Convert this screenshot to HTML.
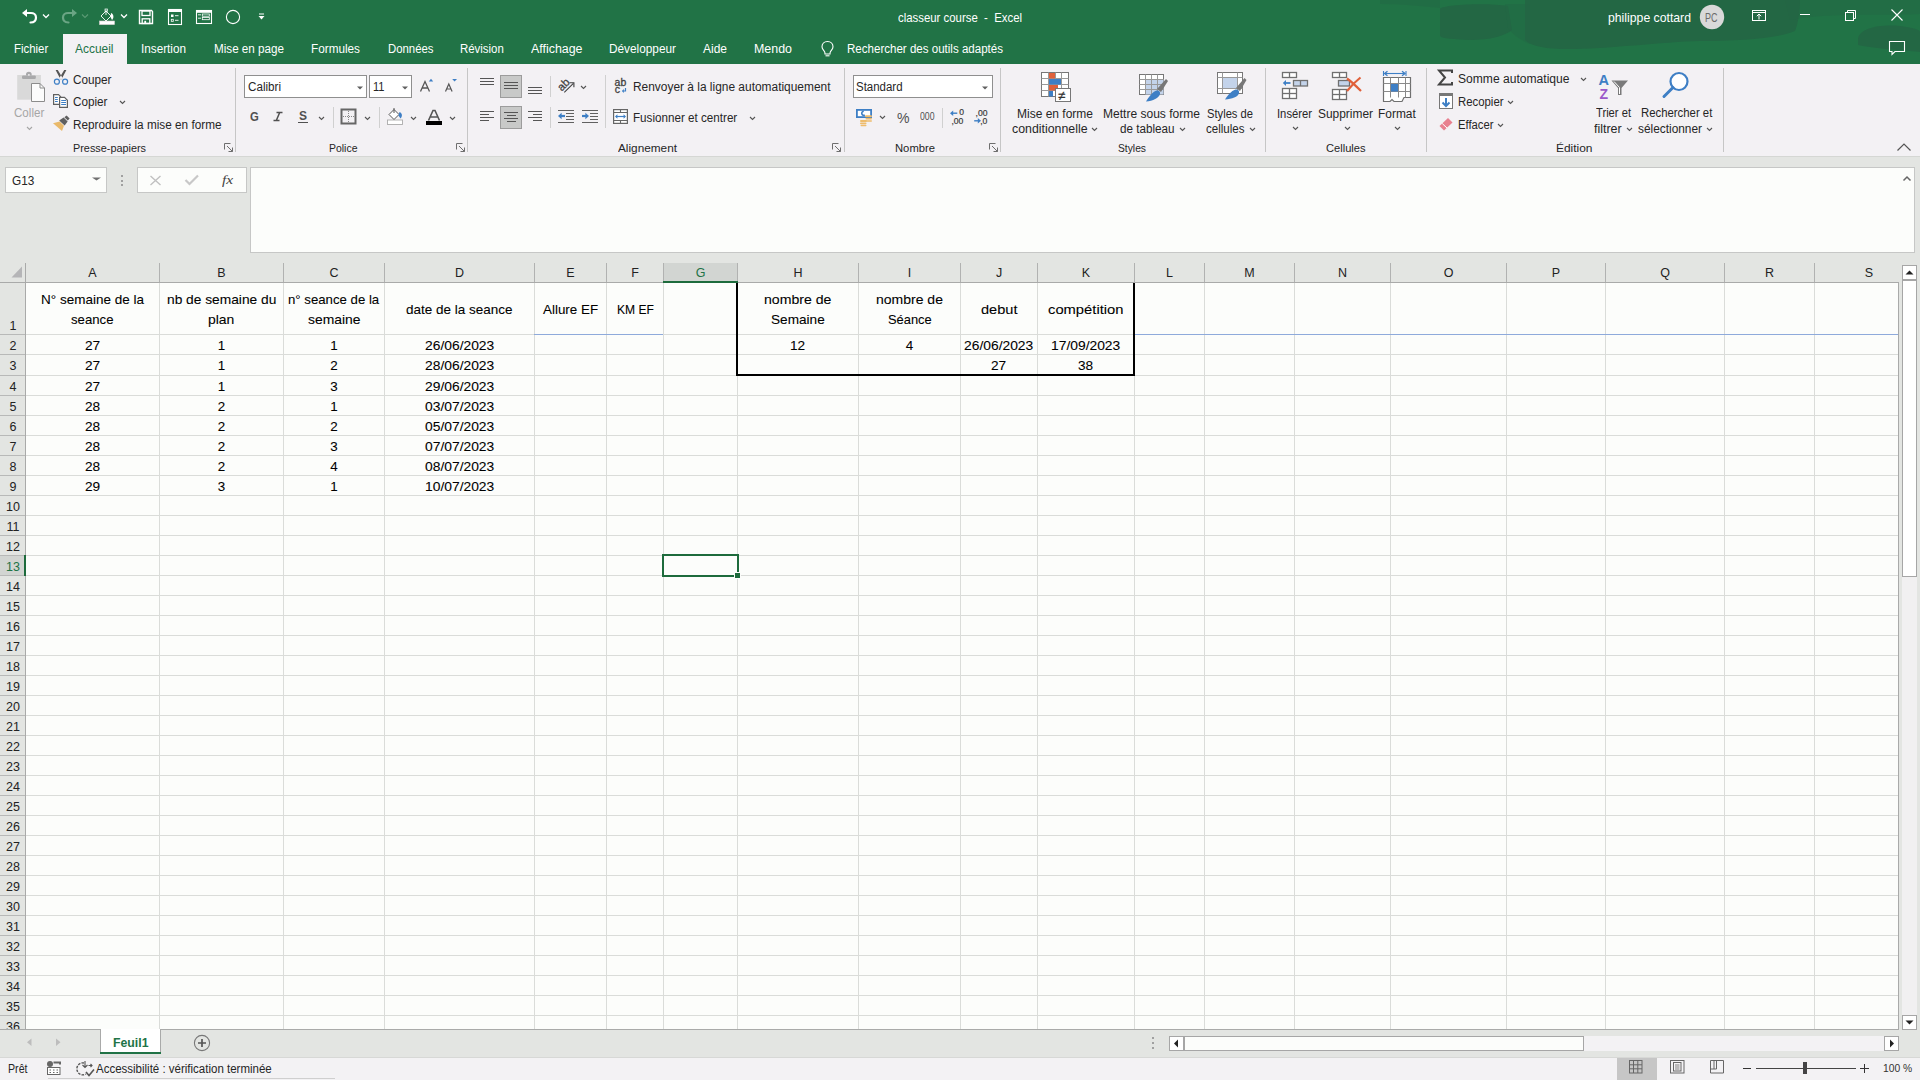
<!DOCTYPE html>
<html><head><meta charset="utf-8"><title>classeur course - Excel</title>
<style>
html,body{margin:0;padding:0;width:1920px;height:1080px;overflow:hidden;background:#f3f2f3}
body{position:relative;font-family:"Liberation Sans",sans-serif}
.t{position:absolute;white-space:pre;transform-origin:0 0}
.r{position:absolute}
.s{position:absolute;overflow:visible}
</style></head><body>
<div class="r" style="left:0px;top:0px;width:1920px;height:64px;background:#217346;"></div>
<svg class="s" style="left:1380px;top:0px;" width="540" height="64" viewBox="0 0 540 64">
<g fill="#236744">
<path d="M60 9 C64 4 110 3 128 6 L132 30 C125 36 110 40 90 40 C75 39 62 39 60 36 Z"/>
<path d="M145 0 H420 C420 10 418 25 415 31 C400 38 360 41 320 41 C280 42 220 50 180 49 C160 48 150 45 145 40 Z"/>
<path d="M478 40 C478 28 500 24 520 26 C535 28 540 30 540 32 V52 C520 50 490 48 478 45 Z"/>
</g>
<g fill="#236744" opacity="0.45">
<path d="M125 4 H150 V44 C140 40 132 34 128 28 Z"/>
<path d="M405 0 H540 V14 C500 16 450 12 410 20 Z"/>
<path d="M0 0 H60 V8 C40 6 20 4 0 4 Z"/>
</g></svg>
<svg class="s" style="left:20px;top:6px;" width="20" height="20" viewBox="0 0 20 20"><path d="M10.5 16.5 C15 16.5 16 13.5 16 11.5 C16 8.5 13.5 7 11 7 H6" fill="none" stroke="#fff" stroke-width="2.2" stroke-linecap="round"/><path d="M2 7 L7 3 V11 Z" fill="#fff"/></svg>
<svg class="s" style="left:42px;top:13px;" width="8" height="6" viewBox="0 0 8 6"><path d="M1 1.5 L4 4.5 L7 1.5" fill="none" stroke="#fff" stroke-width="1.3"/></svg>
<svg class="s" style="left:59px;top:6px;" width="20" height="20" viewBox="0 0 20 20"><path d="M9.5 16.5 C5 16.5 4 13.5 4 11.5 C4 8.5 6.5 7 9 7 H14" fill="none" stroke="#6aa584" stroke-width="2.2" stroke-linecap="round"/><path d="M18 7 L13 3 V11 Z" fill="#6aa584"/></svg>
<svg class="s" style="left:81px;top:13px;" width="8" height="6" viewBox="0 0 8 6"><path d="M1 1.5 L4 4.5 L7 1.5" fill="none" stroke="#5b9a74" stroke-width="1.1"/></svg>
<svg class="s" style="left:98px;top:8px;" width="18" height="18" viewBox="0 0 18 18"><rect x="1.5" y="13" width="15" height="3.6" fill="#fff" stroke="#d8d0d0" stroke-width="0.6"/><path d="M3 8 L8 3 L13 8 L8 13 Z" fill="none" stroke="#fff" stroke-width="0.9"/><path d="M8 1.5 V7" stroke="#fff" stroke-width="0.9"/><rect x="7" y="1" width="2.4" height="2.6" fill="none" stroke="#fff" stroke-width="0.7"/><path d="M13 5 C16 6 16 10 14 12 L12.5 9 Z" fill="#fff"/></svg>
<svg class="s" style="left:120px;top:13px;" width="8" height="6" viewBox="0 0 8 6"><path d="M1 1.5 L4 4.5 L7 1.5" fill="none" stroke="#fff" stroke-width="1.3"/></svg>
<svg class="s" style="left:138px;top:9px;" width="16" height="16" viewBox="0 0 16 16"><path d="M1.5 1.5 H13.5 L14.5 2.5 V14.5 H1.5 Z" fill="none" stroke="#fff" stroke-width="1.4"/><rect x="4" y="2" width="8" height="4.5" fill="none" stroke="#fff" stroke-width="1.3"/><rect x="4.2" y="9.8" width="7.6" height="4.7" fill="none" stroke="#fff" stroke-width="1.3"/><rect x="6.3" y="11.8" width="1.8" height="2.5" fill="#fff"/></svg>
<svg class="s" style="left:167px;top:8px;" width="16" height="18" viewBox="0 0 16 18"><rect x="1.5" y="1.5" width="13" height="15" fill="none" stroke="#fff" stroke-width="1.1"/><rect x="1.5" y="1.5" width="13" height="2.5" fill="#fff"/><rect x="4" y="6.5" width="2.5" height="2.5" fill="#fff"/><rect x="4.3" y="11.3" width="2" height="2" fill="none" stroke="#fff" stroke-width="0.8"/><path d="M8 7.7 H11.5 M8 12.3 H11.5" stroke="#fff" stroke-width="0.9"/></svg>
<svg class="s" style="left:195px;top:9px;" width="18" height="16" viewBox="0 0 18 16"><rect x="1.5" y="1.5" width="15" height="13" fill="none" stroke="#fff" stroke-width="1.1"/><rect x="1.5" y="1.5" width="15" height="2.3" fill="#fff"/><path d="M3 5.8 H6 M3 9.2 H6" stroke="#fff" stroke-width="0.9"/><rect x="7.3" y="5" width="7" height="2.2" fill="none" stroke="#fff" stroke-width="0.8"/><rect x="7.3" y="8.5" width="7" height="2.2" fill="none" stroke="#fff" stroke-width="0.8"/></svg>
<svg class="s" style="left:225px;top:9px;" width="16" height="16" viewBox="0 0 16 16"><circle cx="8" cy="8" r="6.6" fill="none" stroke="#fff" stroke-width="1.1"/></svg>
<svg class="s" style="left:257px;top:12px;" width="9" height="9" viewBox="0 0 9 9"><path d="M2 2 H7" stroke="#fff" stroke-width="1"/><path d="M1.5 4 H7.5 L4.5 7.5 Z" fill="#fff"/></svg>
<div class="t" style="left:898.00px;top:11.20px;font-size:13px;line-height:13px;color:#ffffff;font-weight:400;transform:scaleX(0.8757);">classeur course  -  Excel</div>
<div class="t" style="left:1607.50px;top:11.20px;font-size:13px;line-height:13px;color:#ffffff;font-weight:400;transform:scaleX(0.9413);">philippe cottard</div>
<svg class="s" style="left:1699px;top:4px;" width="26" height="26" viewBox="0 0 26 26"><circle cx="13" cy="13" r="12.2" fill="#d9d9d9"/></svg>
<div class="t" style="left:1705.25px;top:11.74px;font-size:12px;line-height:12px;color:#6b6b6b;font-weight:400;transform:scaleX(0.7498);">PC</div>
<svg class="s" style="left:1750px;top:8px;" width="18" height="14" viewBox="0 0 18 14"><rect x="2.5" y="2.5" width="13" height="10" fill="none" stroke="#fff" stroke-width="1"/><path d="M2.5 4.5 H15.5" stroke="#fff" stroke-width="1"/><path d="M9 11.5 V6 M6.8 8.2 L9 6 L11.2 8.2" fill="none" stroke="#fff" stroke-width="1"/></svg>
<div class="r" style="left:1800px;top:14px;width:10px;height:1px;background:#fff;"></div>
<svg class="s" style="left:1843px;top:8px;" width="16" height="14" viewBox="0 0 16 14"><rect x="2.5" y="4.5" width="8" height="8" fill="none" stroke="#fff" stroke-width="1"/><path d="M4.5 4.5 V2.5 H12.5 V10.5 H10.5" fill="none" stroke="#fff" stroke-width="1"/></svg>
<svg class="s" style="left:1889px;top:8px;" width="16" height="14" viewBox="0 0 16 14"><path d="M2.5 1.5 L13.5 12.5 M13.5 1.5 L2.5 12.5" stroke="#fff" stroke-width="1.1"/></svg>
<svg class="s" style="left:1887px;top:39px;" width="20" height="18" viewBox="0 0 20 18"><path d="M2.5 2.5 H17.5 V12.5 H8 L5 15.5 V12.5 H2.5 Z" fill="none" stroke="#fff" stroke-width="1.1"/></svg>
<div class="r" style="left:63px;top:34px;width:64px;height:30px;background:#f3f1f4;"></div>
<div class="t" style="left:13.75px;top:43.24px;font-size:12px;line-height:12px;color:#ffffff;font-weight:400;transform:scaleX(0.9512);">Fichier</div>
<div class="t" style="left:75.00px;top:43.24px;font-size:12px;line-height:12px;color:#217346;font-weight:400;transform:scaleX(0.9952);">Accueil</div>
<div class="t" style="left:141.00px;top:43.24px;font-size:12px;line-height:12px;color:#ffffff;font-weight:400;transform:scaleX(0.9777);">Insertion</div>
<div class="t" style="left:214.00px;top:43.24px;font-size:12px;line-height:12px;color:#ffffff;font-weight:400;transform:scaleX(0.9716);">Mise en page</div>
<div class="t" style="left:311.00px;top:43.24px;font-size:12px;line-height:12px;color:#ffffff;font-weight:400;transform:scaleX(0.9798);">Formules</div>
<div class="t" style="left:387.50px;top:43.24px;font-size:12px;line-height:12px;color:#ffffff;font-weight:400;transform:scaleX(0.9472);">Données</div>
<div class="t" style="left:460.00px;top:43.24px;font-size:12px;line-height:12px;color:#ffffff;font-weight:400;transform:scaleX(0.9507);">Révision</div>
<div class="t" style="left:531.00px;top:43.24px;font-size:12px;line-height:12px;color:#ffffff;font-weight:400;transform:scaleX(1.0338);">Affichage</div>
<div class="t" style="left:609.00px;top:43.24px;font-size:12px;line-height:12px;color:#ffffff;font-weight:400;transform:scaleX(0.9846);">Développeur</div>
<div class="t" style="left:703.00px;top:43.24px;font-size:12px;line-height:12px;color:#ffffff;font-weight:400;">Aide</div>
<div class="t" style="left:754.00px;top:43.24px;font-size:12px;line-height:12px;color:#ffffff;font-weight:400;transform:scaleX(1.0356);">Mendo</div>
<div class="t" style="left:847.00px;top:43.24px;font-size:12px;line-height:12px;color:#ffffff;font-weight:400;transform:scaleX(0.9624);">Rechercher des outils adaptés</div>
<svg class="s" style="left:819px;top:40px;" width="17" height="18" viewBox="0 0 17 18"><path d="M8.5 1.5 C5 1.5 3 4 3 6.8 C3 9 4.5 10 5.5 11.5 C6 12.5 6 13 6 14 H11 C11 13 11 12.5 11.5 11.5 C12.5 10 14 9 14 6.8 C14 4 12 1.5 8.5 1.5 Z" fill="none" stroke="#fff" stroke-width="1.1"/><path d="M6.5 15.8 H10.5" stroke="#fff" stroke-width="1.1"/></svg>
<div class="r" style="left:0px;top:64px;width:1920px;height:92px;background:#f3f1f4;"></div>
<div class="r" style="left:0px;top:156px;width:1920px;height:1px;background:#d5d7d4;"></div>
<div class="r" style="left:235px;top:68px;width:1px;height:84px;background:#c6c6c6;"></div>
<div class="r" style="left:467px;top:68px;width:1px;height:84px;background:#c6c6c6;"></div>
<div class="r" style="left:844px;top:68px;width:1px;height:84px;background:#c6c6c6;"></div>
<div class="r" style="left:1000px;top:68px;width:1px;height:84px;background:#c6c6c6;"></div>
<div class="r" style="left:1265px;top:68px;width:1px;height:84px;background:#c6c6c6;"></div>
<div class="r" style="left:1426px;top:68px;width:1px;height:84px;background:#c6c6c6;"></div>
<div class="r" style="left:1723px;top:68px;width:1px;height:84px;background:#c6c6c6;"></div>
<div class="r" style="left:333px;top:107px;width:1px;height:21px;background:#d0d0d0;"></div>
<div class="r" style="left:379px;top:107px;width:1px;height:21px;background:#d0d0d0;"></div>
<div class="r" style="left:550px;top:76px;width:1px;height:21px;background:#d0d0d0;"></div>
<div class="r" style="left:550px;top:107px;width:1px;height:21px;background:#d0d0d0;"></div>
<div class="r" style="left:605px;top:75px;width:1px;height:53px;background:#d0d0d0;"></div>
<div class="r" style="left:942px;top:108px;width:1px;height:20px;background:#d0d0d0;"></div>
<div class="t" style="left:72.50px;top:142.59px;font-size:11px;line-height:11px;color:#262626;font-weight:400;transform:scaleX(0.9868);">Presse-papiers</div>
<div class="t" style="left:329.00px;top:142.59px;font-size:11px;line-height:11px;color:#262626;font-weight:400;transform:scaleX(0.9512);">Police</div>
<div class="t" style="left:618.00px;top:142.59px;font-size:11px;line-height:11px;color:#262626;font-weight:400;transform:scaleX(1.0721);">Alignement</div>
<div class="t" style="left:894.50px;top:142.59px;font-size:11px;line-height:11px;color:#262626;font-weight:400;transform:scaleX(1.0224);">Nombre</div>
<div class="t" style="left:1118.00px;top:142.59px;font-size:11px;line-height:11px;color:#262626;font-weight:400;transform:scaleX(0.9347);">Styles</div>
<div class="t" style="left:1326.00px;top:142.59px;font-size:11px;line-height:11px;color:#262626;font-weight:400;transform:scaleX(1.0095);">Cellules</div>
<div class="t" style="left:1556.00px;top:142.59px;font-size:11px;line-height:11px;color:#262626;font-weight:400;transform:scaleX(1.0852);">Édition</div>
<svg class="s" style="left:224px;top:143px;" width="10" height="10" viewBox="0 0 10 10"><path d="M0.5 6.5 V0.5 H6.5" fill="none" stroke="#6e6e6e" stroke-width="1"/><path d="M3 3 L8.5 8.5 M4.5 8.5 H8.5 V4.5" fill="none" stroke="#6e6e6e" stroke-width="1"/></svg>
<svg class="s" style="left:456px;top:143px;" width="10" height="10" viewBox="0 0 10 10"><path d="M0.5 6.5 V0.5 H6.5" fill="none" stroke="#6e6e6e" stroke-width="1"/><path d="M3 3 L8.5 8.5 M4.5 8.5 H8.5 V4.5" fill="none" stroke="#6e6e6e" stroke-width="1"/></svg>
<svg class="s" style="left:832px;top:143px;" width="10" height="10" viewBox="0 0 10 10"><path d="M0.5 6.5 V0.5 H6.5" fill="none" stroke="#6e6e6e" stroke-width="1"/><path d="M3 3 L8.5 8.5 M4.5 8.5 H8.5 V4.5" fill="none" stroke="#6e6e6e" stroke-width="1"/></svg>
<svg class="s" style="left:989px;top:143px;" width="10" height="10" viewBox="0 0 10 10"><path d="M0.5 6.5 V0.5 H6.5" fill="none" stroke="#6e6e6e" stroke-width="1"/><path d="M3 3 L8.5 8.5 M4.5 8.5 H8.5 V4.5" fill="none" stroke="#6e6e6e" stroke-width="1"/></svg>
<svg class="s" style="left:15px;top:70px;" width="32" height="34" viewBox="0 0 32 34"><rect x="2.2" y="5" width="23.7" height="24.7" fill="#d9d9d9"/><rect x="7" y="5.4" width="13.8" height="3.6" rx="1.2" fill="#a9a9ab"/><path d="M11 5.5 V4.5 A2.85 2.85 0 0 1 16.7 4.5 V5.5 Z" fill="#a9a9ab"/><circle cx="13.9" cy="4.8" r="0.9" fill="#f3f1f4"/><path d="M16.5 13.5 H25 L29.5 18 V31.5 H16.5 Z" fill="#fcfcfc" stroke="#8c8c8c" stroke-width="1"/><path d="M25 13.5 V18 H29.5" fill="none" stroke="#8c8c8c" stroke-width="1"/></svg>
<div class="t" style="left:13.50px;top:106.99px;font-size:12px;line-height:12px;color:#a6a6a6;font-weight:400;transform:scaleX(0.9651);">Coller</div>
<svg class="s" style="left:26.1px;top:126.0px;" width="7" height="5" viewBox="0 0 7 5"><path d="M1 1 L3.5 3.5 L6 1" fill="none" stroke="#a6a6a6" stroke-width="1.1"/></svg>
<svg class="s" style="left:53px;top:69px;" width="16" height="17" viewBox="0 0 16 17"><path d="M2.6 1 L4.8 1 L9.6 9 L7.6 10.6 Z M13.4 1 L11.2 1 L6.4 9 L8.4 10.6 Z" fill="#555"/><circle cx="3.9" cy="12.7" r="2.5" fill="#f3f1f4" stroke="#3e7fc5" stroke-width="1.2"/><circle cx="12.1" cy="12.7" r="2.5" fill="#f3f1f4" stroke="#3e7fc5" stroke-width="1.2"/></svg>
<div class="t" style="left:72.50px;top:73.64px;font-size:12px;line-height:12px;color:#262626;font-weight:400;transform:scaleX(0.9782);">Couper</div>
<svg class="s" style="left:52px;top:93px;" width="17" height="16" viewBox="0 0 17 16"><path d="M1.6 1.6 H6.5 L8.6 3.7 V11.4 H1.6 Z" fill="#fff" stroke="#606060" stroke-width="1.2"/><path d="M7.6 4.4 H12.5 L15.4 7.3 V14.4 H7.6 Z" fill="#fff" stroke="#606060" stroke-width="1.2"/><path d="M3 4.5 H5.8 M3 6.5 H5.8 M3 8.5 H5.8 M9.2 7.5 H14 M9.2 9.5 H14 M9.2 11.5 H14" stroke="#3e7fc5" stroke-width="1"/></svg>
<div class="t" style="left:72.50px;top:96.14px;font-size:12px;line-height:12px;color:#262626;font-weight:400;transform:scaleX(0.9759);">Copier</div>
<svg class="s" style="left:118.5px;top:100.0px;" width="7" height="5" viewBox="0 0 7 5"><path d="M1 1 L3.5 3.5 L6 1" fill="none" stroke="#555" stroke-width="1.1"/></svg>
<svg class="s" style="left:52px;top:116px;" width="18" height="16" viewBox="0 0 18 16"><path d="M1 7.2 L7.6 5.4 L12 9.8 L10 15 Z" fill="#e9b96a"/><path d="M7.2 4.6 L11.6 1.6 L15.6 5.6 L12.6 9.6 Z" fill="#5f5f5f"/><path d="M12.4 1.2 L14.6 -0.6 L17.6 2.4 L15.8 4.6 Z" fill="#5f5f5f"/></svg>
<div class="t" style="left:72.50px;top:119.24px;font-size:12px;line-height:12px;color:#262626;font-weight:400;transform:scaleX(0.9808);">Reproduire la mise en forme</div>
<div class="r" style="left:244px;top:75px;width:123px;height:23px;background:#fff;box-sizing:border-box;border:1px solid #8f8f8f"></div>
<div class="t" style="left:247.50px;top:80.84px;font-size:12px;line-height:12px;color:#262626;font-weight:400;transform:scaleX(0.9703);">Calibri</div>
<svg class="s" style="left:356.5px;top:86px;" width="6" height="4" viewBox="0 0 6 4"><path d="M0 0.5 H6 L3.0 3.5 Z" fill="#606060"/></svg>
<div class="r" style="left:369px;top:75px;width:43px;height:23px;background:#fff;box-sizing:border-box;border:1px solid #8f8f8f"></div>
<div class="t" style="left:372.50px;top:80.84px;font-size:12px;line-height:12px;color:#262626;font-weight:400;transform:scaleX(0.9231);">11</div>
<svg class="s" style="left:401.5px;top:86px;" width="6" height="4" viewBox="0 0 6 4"><path d="M0 0.5 H6 L3.0 3.5 Z" fill="#606060"/></svg>
<svg class="s" style="left:418px;top:77px;" width="18" height="16" viewBox="0 0 18 16"><path d="M2.5 14.5 L7 4.5 L11.5 14.5 M4.3 11 H9.7" fill="none" stroke="#555" stroke-width="1.3"/><path d="M10.8 4.5 L13 1.8 L15.2 4.5 Z" fill="#3e7fc5"/></svg>
<svg class="s" style="left:443px;top:77px;" width="16" height="16" viewBox="0 0 16 16"><path d="M2.5 14.5 L5.8 7 L9.1 14.5 M3.8 12 H7.8" fill="none" stroke="#555" stroke-width="1.2"/><path d="M9.2 2 H14 L11.6 4.6 Z" fill="#3e7fc5"/></svg>
<div class="t" style="left:250.00px;top:110.82px;font-size:12.5px;line-height:12.5px;color:#505050;font-weight:700;transform:scaleX(0.9000);">G</div>
<svg class="s" style="left:272px;top:110px;" width="12" height="13" viewBox="0 0 12 13"><path d="M4.5 2.5 H10.5 M1.5 10.5 H7.5 M7.7 2.5 L4.3 10.5" fill="none" stroke="#505050" stroke-width="1.5"/></svg>
<div class="t" style="left:299.00px;top:110.24px;font-size:12px;line-height:12px;color:#505050;font-weight:700;">S</div>
<div class="r" style="left:298px;top:122px;width:10px;height:1px;background:#505050;"></div>
<svg class="s" style="left:317.5px;top:115.5px;" width="7" height="5" viewBox="0 0 7 5"><path d="M1 1 L3.5 3.5 L6 1" fill="none" stroke="#555" stroke-width="1.1"/></svg>
<svg class="s" style="left:340px;top:108px;" width="17" height="17" viewBox="0 0 17 17"><rect x="1.5" y="1.5" width="14" height="14" fill="none" stroke="#666" stroke-width="2"/><path d="M8.5 3 V14 M3 8.5 H14" stroke="#888" stroke-width="1" stroke-dasharray="1 1"/></svg>
<svg class="s" style="left:363.5px;top:115.5px;" width="7" height="5" viewBox="0 0 7 5"><path d="M1 1 L3.5 3.5 L6 1" fill="none" stroke="#555" stroke-width="1.1"/></svg>
<svg class="s" style="left:386px;top:107px;" width="18" height="19" viewBox="0 0 18 19"><rect x="1.5" y="13" width="15" height="4.5" fill="#fff" stroke="#aaa" stroke-width="0.9"/><path d="M3 7.5 L8 2.5 L13 7.5 L8 12.5 Z" fill="#fff" stroke="#555" stroke-width="1"/><path d="M8 1 V6" stroke="#555" stroke-width="1"/><path d="M13.5 5 C16.5 6 16.5 9.5 14.5 11.5 L12.5 8.5 Z" fill="#3e7fc5"/></svg>
<svg class="s" style="left:409.5px;top:115.5px;" width="7" height="5" viewBox="0 0 7 5"><path d="M1 1 L3.5 3.5 L6 1" fill="none" stroke="#555" stroke-width="1.1"/></svg>
<svg class="s" style="left:425px;top:109px;" width="18" height="17" viewBox="0 0 18 17"><path d="M3.5 11.5 L8 1.5 H10 L14.5 11.5 M5.5 8 H12.5" fill="none" stroke="#555" stroke-width="1.6"/><rect x="1" y="12" width="16" height="4" fill="#000"/></svg>
<svg class="s" style="left:448.5px;top:115.5px;" width="7" height="5" viewBox="0 0 7 5"><path d="M1 1 L3.5 3.5 L6 1" fill="none" stroke="#555" stroke-width="1.1"/></svg>
<div class="r" style="left:480px;top:78px;width:14px;height:1px;background:#555;"></div>
<div class="r" style="left:480px;top:81px;width:14px;height:1px;background:#555;"></div>
<div class="r" style="left:480px;top:84px;width:14px;height:1px;background:#555;"></div>
<div class="r" style="left:500px;top:75px;width:22px;height:23px;background:#c8c9c8;box-sizing:border-box;border:1px solid #9c9c9c"></div>
<div class="r" style="left:504px;top:82px;width:14px;height:1px;background:#555;"></div>
<div class="r" style="left:504px;top:85px;width:14px;height:1px;background:#555;"></div>
<div class="r" style="left:504px;top:88px;width:14px;height:1px;background:#555;"></div>
<div class="r" style="left:528px;top:87px;width:14px;height:1px;background:#555;"></div>
<div class="r" style="left:528px;top:90px;width:14px;height:1px;background:#555;"></div>
<div class="r" style="left:528px;top:93px;width:14px;height:1px;background:#555;"></div>
<svg class="s" style="left:556px;top:77px;" width="20" height="18" viewBox="0 0 20 18"><text x="0" y="0" transform="translate(7.3,7.6) rotate(-45)" text-anchor="middle" dy="3.9" font-family="Liberation Sans" font-size="11.2" fill="#404040" stroke="#404040" stroke-width="0.25">ab</text><path d="M8.3 15.4 L17.4 6.3" stroke="#404040" stroke-width="1.1"/><path d="M13.5 5.8 H17.9 V10.2" fill="none" stroke="#404040" stroke-width="1.1"/></svg>
<svg class="s" style="left:579.5px;top:84.5px;" width="7" height="5" viewBox="0 0 7 5"><path d="M1 1 L3.5 3.5 L6 1" fill="none" stroke="#555" stroke-width="1.1"/></svg>
<svg class="s" style="left:613px;top:76px;" width="16" height="18" viewBox="0 0 16 18"><text x="1.6" y="9.8" font-family="Liberation Sans" font-size="10.5" fill="#404040" stroke="#404040" stroke-width="0.3" textLength="11.6" lengthAdjust="spacingAndGlyphs">ab</text><text x="1.8" y="16.8" font-family="Liberation Sans" font-size="10.5" fill="#404040" stroke="#404040" stroke-width="0.3">c</text><path d="M12.5 12 V15 H10" fill="none" stroke="#3e7fc5" stroke-width="1.2"/><path d="M8.8 15 L10.8 13 V17 Z" fill="#3e7fc5"/></svg>
<div class="t" style="left:632.50px;top:80.84px;font-size:12px;line-height:12px;color:#262626;font-weight:400;transform:scaleX(0.9935);">Renvoyer à la ligne automatiquement</div>
<div class="r" style="left:480px;top:111px;width:14px;height:1px;background:#555;"></div>
<div class="r" style="left:480px;top:114px;width:9px;height:1px;background:#555;"></div>
<div class="r" style="left:480px;top:117px;width:14px;height:1px;background:#555;"></div>
<div class="r" style="left:480px;top:120px;width:9px;height:1px;background:#555;"></div>
<div class="r" style="left:500px;top:106px;width:22px;height:23px;background:#c8c9c8;box-sizing:border-box;border:1px solid #9c9c9c"></div>
<div class="r" style="left:504px;top:112px;width:14px;height:1px;background:#555;"></div>
<div class="r" style="left:506.5px;top:115px;width:9px;height:1px;background:#555;"></div>
<div class="r" style="left:504px;top:118px;width:14px;height:1px;background:#555;"></div>
<div class="r" style="left:506.5px;top:121px;width:9px;height:1px;background:#555;"></div>
<div class="r" style="left:528px;top:111px;width:14px;height:1px;background:#555;"></div>
<div class="r" style="left:533px;top:114px;width:9px;height:1px;background:#555;"></div>
<div class="r" style="left:528px;top:117px;width:14px;height:1px;background:#555;"></div>
<div class="r" style="left:533px;top:120px;width:9px;height:1px;background:#555;"></div>
<svg class="s" style="left:556px;top:108px;" width="20" height="17" viewBox="0 0 20 17"><path d="M2 2.5 H18 M10 5.5 H18 M10 8.5 H18 M10 11.5 H18 M2 14.5 H18" stroke="#606060" stroke-width="1.1"/><path d="M4.5 8 H9" stroke="#3e7fc5" stroke-width="2.2"/><path d="M2 8 L5.6 4.8 V11.2 Z" fill="#3e7fc5"/></svg>
<svg class="s" style="left:580px;top:108px;" width="20" height="17" viewBox="0 0 20 17"><path d="M2 2.5 H18 M10 5.5 H18 M10 8.5 H18 M10 11.5 H18 M2 14.5 H18" stroke="#606060" stroke-width="1.1"/><path d="M2 8 H6.5" stroke="#3e7fc5" stroke-width="2.2"/><path d="M9 8 L5.4 4.8 V11.2 Z" fill="#3e7fc5"/></svg>
<svg class="s" style="left:612px;top:108px;" width="17" height="17" viewBox="0 0 17 17"><rect x="1.6" y="1.6" width="13.8" height="13.8" fill="#fff" stroke="#666" stroke-width="1.2"/><path d="M1.5 4.5 H15.5 M1.5 12.5 H15.5 M8.5 1.5 V4.5 M8.5 12.5 V15.5" stroke="#666" stroke-width="1.1"/><path d="M4.5 8.5 H12.5" stroke="#3e7fc5" stroke-width="1.2"/><path d="M3 8.5 L5.4 6.3 V10.7 Z M14 8.5 L11.6 6.3 V10.7 Z" fill="#3e7fc5"/></svg>
<div class="t" style="left:632.50px;top:111.99px;font-size:12px;line-height:12px;color:#262626;font-weight:400;transform:scaleX(0.9708);">Fusionner et centrer</div>
<svg class="s" style="left:748.5px;top:115.5px;" width="7" height="5" viewBox="0 0 7 5"><path d="M1 1 L3.5 3.5 L6 1" fill="none" stroke="#555" stroke-width="1.1"/></svg>
<div class="r" style="left:853px;top:75px;width:140px;height:23px;background:#fff;box-sizing:border-box;border:1px solid #8f8f8f"></div>
<div class="t" style="left:856.00px;top:81.24px;font-size:12px;line-height:12px;color:#262626;font-weight:400;transform:scaleX(0.9547);">Standard</div>
<svg class="s" style="left:982px;top:86px;" width="6" height="4" viewBox="0 0 6 4"><path d="M0 0.5 H6 L3.0 3.5 Z" fill="#606060"/></svg>
<svg class="s" style="left:854px;top:107px;" width="20" height="20" viewBox="0 0 20 20"><rect x="2.9" y="2.9" width="14.2" height="7.2" fill="#fff" stroke="#3e7fc5" stroke-width="1.8"/><path d="M9.8 4.3 A2 2 0 1 0 10.8 8" fill="none" stroke="#3e7fc5" stroke-width="1.6"/><g fill="#eebc6c"><rect x="11" y="8.3" width="7" height="2" rx="1"/><rect x="11.5" y="11" width="6.5" height="1.6" rx="0.8"/><rect x="12" y="13.2" width="6" height="1.6" rx="0.8"/><rect x="6" y="13" width="7" height="2" rx="1"/><rect x="6" y="15.6" width="6.5" height="1.6" rx="0.8"/><rect x="6.5" y="17.8" width="6" height="1.4" rx="0.7"/></g></svg>
<svg class="s" style="left:879.0px;top:114.5px;" width="7" height="5" viewBox="0 0 7 5"><path d="M1 1 L3.5 3.5 L6 1" fill="none" stroke="#555" stroke-width="1.1"/></svg>
<div class="t" style="left:897.00px;top:111.15px;font-size:14px;line-height:14px;color:#505050;font-weight:400;transform:scaleX(1.0042);">%</div>
<div class="t" style="left:919.50px;top:112.44px;font-size:10px;line-height:10px;color:#505050;font-weight:400;transform:scaleX(0.8690);">000</div>
<svg class="s" style="left:949px;top:108px;" width="18" height="18" viewBox="0 0 18 18"><g font-family="Liberation Sans" font-size="8.6" fill="#3a3a3a" stroke="#3a3a3a" stroke-width="0.2"><text x="10.2" y="7.4">0</text><text x="2.4" y="16">,00</text></g><path d="M3 5.2 H8.3" stroke="#3e7fc5" stroke-width="1.4"/><path d="M1 5.2 L4.2 2.4 V8 Z" fill="#3e7fc5"/></svg>
<svg class="s" style="left:973px;top:108px;" width="18" height="18" viewBox="0 0 18 18"><g font-family="Liberation Sans" font-size="8.6" fill="#3a3a3a" stroke="#3a3a3a" stroke-width="0.2"><text x="2.6" y="7.6">,00</text><text x="7.2" y="16">,0</text></g><path d="M1.2 12.8 H6" stroke="#3e7fc5" stroke-width="1.4"/><path d="M8 12.8 L4.8 10 V15.6 Z" fill="#3e7fc5"/></svg>
<svg class="s" style="left:1040px;top:71px;" width="33" height="32" viewBox="0 0 33 32"><rect x="1.5" y="1.5" width="27" height="24" fill="#fff" stroke="#777" stroke-width="1"/>
<path d="M8.5 1.5 V25.5 M15.5 1.5 V25.5 M21.5 1.5 V25.5 M1.5 7.5 H28.5 M1.5 13.5 H28.5 M1.5 19.5 H28.5" stroke="#999" stroke-width="1"/>
<rect x="9" y="2" width="6" height="5.5" fill="#e0603a"/><rect x="9" y="8" width="12" height="5.5" fill="#3e7fc5"/><rect x="9" y="14" width="9" height="5.5" fill="#e0603a"/><rect x="9" y="20" width="4" height="5.5" fill="#3e7fc5"/>
<rect x="15.5" y="17.5" width="15" height="13" fill="#fff" stroke="#777" stroke-width="1"/><text x="18" y="28.5" font-family="Liberation Sans" font-size="13" fill="#333" stroke="#333" stroke-width="0.3">≠</text></svg>
<div class="t" style="left:1017.00px;top:107.74px;font-size:12px;line-height:12px;color:#262626;font-weight:400;">Mise en forme</div>
<div class="t" style="left:1012.00px;top:123.24px;font-size:12px;line-height:12px;color:#262626;font-weight:400;transform:scaleX(1.0287);">conditionnelle</div>
<svg class="s" style="left:1090.5px;top:126.5px;" width="7" height="5" viewBox="0 0 7 5"><path d="M1 1 L3.5 3.5 L6 1" fill="none" stroke="#555" stroke-width="1.1"/></svg>
<svg class="s" style="left:1138px;top:73px;" width="32" height="30" viewBox="0 0 32 30"><rect x="1.5" y="1.5" width="24" height="20" fill="#fff" stroke="#777" stroke-width="1"/>
<rect x="7.5" y="6.5" width="18" height="15" fill="#c3d3ea"/>
<path d="M7.5 1.5 V21.5 M13.5 1.5 V21.5 M19.5 1.5 V21.5 M1.5 6.5 H25.5 M1.5 11.5 H25.5 M1.5 16.5 H25.5" stroke="#999" stroke-width="1"/>
<path d="M19 16 L28 6 L30 8 L23 19 Z" fill="#777"/><path d="M8 28.5 C11 24 14 19 18.5 17.5 C21 17 22.5 19 22 21 C21 25 15 28 8 28.5 Z" fill="#3e7fc5"/></svg>
<div class="t" style="left:1103.00px;top:107.74px;font-size:12px;line-height:12px;color:#262626;font-weight:400;transform:scaleX(1.0031);">Mettre sous forme</div>
<div class="t" style="left:1119.50px;top:123.24px;font-size:12px;line-height:12px;color:#262626;font-weight:400;transform:scaleX(0.9723);">de tableau</div>
<svg class="s" style="left:1178.5px;top:126.5px;" width="7" height="5" viewBox="0 0 7 5"><path d="M1 1 L3.5 3.5 L6 1" fill="none" stroke="#555" stroke-width="1.1"/></svg>
<svg class="s" style="left:1216px;top:71px;" width="32" height="30" viewBox="0 0 32 30"><rect x="1.5" y="1.5" width="25" height="21" fill="#fff" stroke="#777" stroke-width="1"/>
<rect x="6.5" y="6.5" width="15" height="11" fill="#c3d3ea"/>
<path d="M6.5 1.5 V22.5 M21.5 1.5 V22.5 M1.5 6.5 H26.5 M1.5 17.5 H26.5" stroke="#999" stroke-width="1"/>
<path d="M20 17 L28.5 7 L30.5 9 L24 20 Z" fill="#777"/><path d="M9 28.5 C12 24 15 20 19.5 18.5 C22 18 23.5 20 23 22 C22 26 16 28 9 28.5 Z" fill="#3e7fc5"/></svg>
<div class="t" style="left:1207.00px;top:107.74px;font-size:12px;line-height:12px;color:#262626;font-weight:400;transform:scaleX(0.9319);">Styles de</div>
<div class="t" style="left:1205.50px;top:123.24px;font-size:12px;line-height:12px;color:#262626;font-weight:400;transform:scaleX(0.9620);">cellules</div>
<svg class="s" style="left:1248.5px;top:126.5px;" width="7" height="5" viewBox="0 0 7 5"><path d="M1 1 L3.5 3.5 L6 1" fill="none" stroke="#555" stroke-width="1.1"/></svg>
<svg class="s" style="left:1282px;top:72px;" width="16" height="7" viewBox="0 0 16 7"><rect x="0.5" y="0.5" width="14" height="5" fill="#fff" stroke="#707070" stroke-width="1.3"/><path d="M7.5 0.5 V5.5" stroke="#707070" stroke-width="1.3"/></svg>
<svg class="s" style="left:1282px;top:79px;" width="10" height="8" viewBox="0 0 10 8"><path d="M2 4 H8.5" stroke="#3e7fc5" stroke-width="1.8"/><path d="M0.8 4 L4 1 V7 Z" fill="#3e7fc5"/></svg>
<svg class="s" style="left:1293px;top:80px;" width="17" height="8" viewBox="0 0 17 8"><rect x="0.5" y="0.5" width="14" height="5.5" fill="#c3d3ea" stroke="#707070" stroke-width="1.3"/><path d="M7.5 0.5 V6" stroke="#707070" stroke-width="1.3"/></svg>
<svg class="s" style="left:1282px;top:88px;" width="16" height="12" viewBox="0 0 16 12"><rect x="0.5" y="0.5" width="14" height="10" fill="#fff" stroke="#707070" stroke-width="1.3"/><path d="M7.5 0.5 V10.5" stroke="#707070" stroke-width="1.3"/><path d="M0.5 5.5 H14.5" stroke="#707070" stroke-width="1.3"/></svg>
<svg class="s" style="left:1332px;top:72px;" width="16" height="7" viewBox="0 0 16 7"><rect x="0.5" y="0.5" width="14" height="5" fill="#fff" stroke="#707070" stroke-width="1.3"/><path d="M7.5 0.5 V5.5" stroke="#707070" stroke-width="1.3"/></svg>
<svg class="s" style="left:1338px;top:80px;" width="14" height="8" viewBox="0 0 14 8"><rect x="0.5" y="0.5" width="11" height="5.5" fill="#c3d3ea" stroke="#707070" stroke-width="1.3"/></svg>
<svg class="s" style="left:1332px;top:89px;" width="16" height="12" viewBox="0 0 16 12"><rect x="0.5" y="0.5" width="14" height="10" fill="#fff" stroke="#707070" stroke-width="1.3"/><path d="M7.5 0.5 V10.5" stroke="#707070" stroke-width="1.3"/><path d="M0.5 5.5 H14.5" stroke="#707070" stroke-width="1.3"/></svg>
<svg class="s" style="left:1345px;top:76px;" width="18" height="17" viewBox="0 0 18 17"><path d="M2 2.5 C7 6 11 10 16 15 M15.5 1.5 C11 5 6 10 2 15" fill="none" stroke="#e0603a" stroke-width="2.2"/></svg>
<svg class="s" style="left:1382px;top:70px;" width="31" height="33" viewBox="0 0 31 33"><path d="M1.5 1 V6 M24 1 V6" fill="none" stroke="#3e7fc5" stroke-width="1.1"/><path d="M2.5 3.5 H23" stroke="#3e7fc5" stroke-width="1.1"/>
<path d="M5.5 1.2 L2.5 3.5 L5.5 5.8 M20 1.2 L23 3.5 L20 5.8" fill="none" stroke="#3e7fc5" stroke-width="1.3"/>
<path d="M1.5 7.5 H28.5 V27.5 H22 L20 31.5 H12 L10 29.5 L8 31.5 H1.5 Z" fill="#fff" stroke="#707070" stroke-width="1.2"/>
<path d="M1.5 13.5 H28.5 M1.5 21.5 H28.5 M8.5 7.5 V27.5 M16.5 7.5 V27.5 M23.5 7.5 V27.5" stroke="#8a8a8a" stroke-width="1"/>
<rect x="9" y="14" width="7" height="7.5" fill="#3e7fc5"/></svg>
<div class="t" style="left:1277.00px;top:107.74px;font-size:12px;line-height:12px;color:#262626;font-weight:400;transform:scaleX(0.9371);">Insérer</div>
<svg class="s" style="left:1292.0px;top:125.5px;" width="7" height="5" viewBox="0 0 7 5"><path d="M1 1 L3.5 3.5 L6 1" fill="none" stroke="#555" stroke-width="1.1"/></svg>
<div class="t" style="left:1318.00px;top:107.74px;font-size:12px;line-height:12px;color:#262626;font-weight:400;transform:scaleX(0.9936);">Supprimer</div>
<svg class="s" style="left:1343.5px;top:125.5px;" width="7" height="5" viewBox="0 0 7 5"><path d="M1 1 L3.5 3.5 L6 1" fill="none" stroke="#555" stroke-width="1.1"/></svg>
<div class="t" style="left:1378.00px;top:107.74px;font-size:12px;line-height:12px;color:#262626;font-weight:400;transform:scaleX(0.9933);">Format</div>
<svg class="s" style="left:1394.0px;top:125.5px;" width="7" height="5" viewBox="0 0 7 5"><path d="M1 1 L3.5 3.5 L6 1" fill="none" stroke="#555" stroke-width="1.1"/></svg>
<svg class="s" style="left:1437px;top:69px;" width="17" height="17" viewBox="0 0 17 17"><path d="M15 4 V1.5 H2 L8 8.5 L2 15.5 H15 V13" fill="none" stroke="#444" stroke-width="2"/></svg>
<div class="t" style="left:1457.50px;top:73.24px;font-size:12px;line-height:12px;color:#262626;font-weight:400;transform:scaleX(1.0070);">Somme automatique</div>
<svg class="s" style="left:1579.5px;top:76.5px;" width="7" height="5" viewBox="0 0 7 5"><path d="M1 1 L3.5 3.5 L6 1" fill="none" stroke="#555" stroke-width="1.1"/></svg>
<svg class="s" style="left:1438px;top:92px;" width="16" height="18" viewBox="0 0 16 18"><rect x="1.5" y="1.5" width="13" height="15" fill="#fff" stroke="#777" stroke-width="1"/><rect x="1" y="1" width="14" height="3" fill="#777"/><path d="M8 6 V14 M4.5 10.5 L8 14 L11.5 10.5" fill="none" stroke="#3e7fc5" stroke-width="2"/></svg>
<div class="t" style="left:1457.50px;top:96.24px;font-size:12px;line-height:12px;color:#262626;font-weight:400;transform:scaleX(0.9474);">Recopier</div>
<svg class="s" style="left:1507.0px;top:99.5px;" width="7" height="5" viewBox="0 0 7 5"><path d="M1 1 L3.5 3.5 L6 1" fill="none" stroke="#555" stroke-width="1.1"/></svg>
<svg class="s" style="left:1438px;top:116px;" width="16" height="15" viewBox="0 0 16 15"><path d="M1.5 10 L10 2 L14.5 6.5 L6 14.5 Z" fill="#e8808f"/><path d="M4.2 7.5 L9 12" stroke="#fff" stroke-width="1"/></svg>
<div class="t" style="left:1457.50px;top:118.74px;font-size:12px;line-height:12px;color:#262626;font-weight:400;transform:scaleX(0.9392);">Effacer</div>
<svg class="s" style="left:1497.0px;top:122.5px;" width="7" height="5" viewBox="0 0 7 5"><path d="M1 1 L3.5 3.5 L6 1" fill="none" stroke="#555" stroke-width="1.1"/></svg>
<svg class="s" style="left:1597px;top:71px;" width="34" height="30" viewBox="0 0 34 30"><text x="1.5" y="13.5" font-family="Liberation Sans" font-size="14.5" font-weight="700" fill="#3e7fc5">A</text><text x="2.5" y="28" font-family="Liberation Sans" font-size="14" font-weight="700" fill="#9b59c9">Z</text><path d="M14.5 9.5 H31 L24.5 17 V24 H21 V17 Z" fill="#7a7a7a"/><path d="M17 10.5 L22.5 16.5 V23" fill="none" stroke="#fff" stroke-width="1"/></svg>
<div class="t" style="left:1596.00px;top:106.94px;font-size:12px;line-height:12px;color:#262626;font-weight:400;transform:scaleX(0.9318);">Trier et</div>
<div class="t" style="left:1594.00px;top:122.94px;font-size:12px;line-height:12px;color:#262626;font-weight:400;transform:scaleX(1.0387);">filtrer</div>
<svg class="s" style="left:1626.3px;top:126.5px;" width="7" height="5" viewBox="0 0 7 5"><path d="M1 1 L3.5 3.5 L6 1" fill="none" stroke="#555" stroke-width="1.1"/></svg>
<svg class="s" style="left:1660px;top:70px;" width="32" height="31" viewBox="0 0 32 31"><circle cx="19" cy="11.5" r="8.5" fill="#fff" stroke="#3e7fc5" stroke-width="2.2"/><path d="M13 17.5 L4 26.5" stroke="#3e7fc5" stroke-width="3" stroke-linecap="round"/></svg>
<div class="t" style="left:1640.70px;top:106.94px;font-size:12px;line-height:12px;color:#262626;font-weight:400;transform:scaleX(0.9460);">Rechercher et</div>
<div class="t" style="left:1638.00px;top:122.94px;font-size:12px;line-height:12px;color:#262626;font-weight:400;transform:scaleX(0.9891);">sélectionner</div>
<svg class="s" style="left:1706.2px;top:126.5px;" width="7" height="5" viewBox="0 0 7 5"><path d="M1 1 L3.5 3.5 L6 1" fill="none" stroke="#555" stroke-width="1.1"/></svg>
<svg class="s" style="left:1896px;top:142px;" width="16" height="10" viewBox="0 0 16 10"><path d="M1.5 8.5 L8 2 L14.5 8.5" fill="none" stroke="#555" stroke-width="1.2"/></svg>
<div class="r" style="left:0px;top:157px;width:1920px;height:106px;background:#e3e5e2;"></div>
<div class="r" style="left:5px;top:167px;width:102px;height:26px;background:#fcfdfb;box-sizing:border-box;border:1px solid #c6c7c6"></div>
<div class="t" style="left:12.20px;top:174.62px;font-size:12.5px;line-height:12.5px;color:#262626;font-weight:400;transform:scaleX(0.9438);">G13</div>
<svg class="s" style="left:92px;top:177px;" width="9" height="4" viewBox="0 0 9 4"><path d="M0 0.5 H9 L4.5 3.5 Z" fill="#707070"/></svg>
<div class="r" style="left:121px;top:175px;width:2px;height:2px;background:#a0a0a0;"></div>
<div class="r" style="left:121px;top:179.5px;width:2px;height:2px;background:#a0a0a0;"></div>
<div class="r" style="left:121px;top:184px;width:2px;height:2px;background:#a0a0a0;"></div>
<div class="r" style="left:137px;top:167px;width:110px;height:26px;background:#fcfdfb;box-sizing:border-box;border:1px solid #c6c7c6"></div>
<svg class="s" style="left:149px;top:175px;" width="14" height="11" viewBox="0 0 14 11"><path d="M1.5 1 L11.5 10 M11.5 1 L1.5 10" stroke="#c0c0c0" stroke-width="1.4"/></svg>
<svg class="s" style="left:184px;top:174px;" width="16" height="12" viewBox="0 0 16 12"><path d="M1.5 6 L5.5 10 L14 1.5" fill="none" stroke="#c8c8c8" stroke-width="2.2"/></svg>
<div class="t" style="left:222.00px;top:173.20px;font-size:13px;line-height:13px;color:#444;font-weight:400;transform:scaleX(1.1868);font-family:'Liberation Serif',serif;font-style:italic;">fx</div>
<div class="r" style="left:250px;top:167px;width:1665px;height:86px;background:#fcfdfb;box-sizing:border-box;border:1px solid #c6c7c6"></div>
<svg class="s" style="left:1902px;top:174px;" width="10" height="9" viewBox="0 0 10 9"><path d="M1.5 6.5 L5 3 L8.5 6.5" fill="none" stroke="#666" stroke-width="1.5"/></svg>
<div class="r" style="left:0px;top:263px;width:1899px;height:19px;background:#e3e5e2;"></div>
<div class="r" style="left:0px;top:283px;width:25px;height:746px;background:#e3e5e2;"></div>
<div class="r" style="left:26px;top:283px;width:1872px;height:746px;background:#fcfdfb;"></div>
<div class="r" style="left:664px;top:263px;width:73px;height:19px;background:#d2d5d2;"></div>
<div class="r" style="left:0px;top:556px;width:25px;height:19px;background:#d2d5d2;"></div>
<div class="r" style="left:159px;top:283px;width:1px;height:746px;background:#dadcd9;"></div>
<div class="r" style="left:283px;top:283px;width:1px;height:746px;background:#dadcd9;"></div>
<div class="r" style="left:384px;top:283px;width:1px;height:746px;background:#dadcd9;"></div>
<div class="r" style="left:534px;top:283px;width:1px;height:746px;background:#dadcd9;"></div>
<div class="r" style="left:606px;top:283px;width:1px;height:746px;background:#dadcd9;"></div>
<div class="r" style="left:663px;top:283px;width:1px;height:746px;background:#dadcd9;"></div>
<div class="r" style="left:737px;top:283px;width:1px;height:746px;background:#dadcd9;"></div>
<div class="r" style="left:858px;top:283px;width:1px;height:746px;background:#dadcd9;"></div>
<div class="r" style="left:960px;top:283px;width:1px;height:746px;background:#dadcd9;"></div>
<div class="r" style="left:1037px;top:283px;width:1px;height:746px;background:#dadcd9;"></div>
<div class="r" style="left:1134px;top:283px;width:1px;height:746px;background:#dadcd9;"></div>
<div class="r" style="left:1204px;top:283px;width:1px;height:746px;background:#dadcd9;"></div>
<div class="r" style="left:1294px;top:283px;width:1px;height:746px;background:#dadcd9;"></div>
<div class="r" style="left:1390px;top:283px;width:1px;height:746px;background:#dadcd9;"></div>
<div class="r" style="left:1506px;top:283px;width:1px;height:746px;background:#dadcd9;"></div>
<div class="r" style="left:1605px;top:283px;width:1px;height:746px;background:#dadcd9;"></div>
<div class="r" style="left:1724px;top:283px;width:1px;height:746px;background:#dadcd9;"></div>
<div class="r" style="left:1814px;top:283px;width:1px;height:746px;background:#dadcd9;"></div>
<div class="r" style="left:26px;top:334px;width:1872px;height:1px;background:#dadcd9;"></div>
<div class="r" style="left:26px;top:354px;width:1872px;height:1px;background:#dadcd9;"></div>
<div class="r" style="left:26px;top:375px;width:1872px;height:1px;background:#dadcd9;"></div>
<div class="r" style="left:26px;top:395px;width:1872px;height:1px;background:#dadcd9;"></div>
<div class="r" style="left:26px;top:415px;width:1872px;height:1px;background:#dadcd9;"></div>
<div class="r" style="left:26px;top:435px;width:1872px;height:1px;background:#dadcd9;"></div>
<div class="r" style="left:26px;top:455px;width:1872px;height:1px;background:#dadcd9;"></div>
<div class="r" style="left:26px;top:475px;width:1872px;height:1px;background:#dadcd9;"></div>
<div class="r" style="left:26px;top:495px;width:1872px;height:1px;background:#dadcd9;"></div>
<div class="r" style="left:26px;top:515px;width:1872px;height:1px;background:#dadcd9;"></div>
<div class="r" style="left:26px;top:535px;width:1872px;height:1px;background:#dadcd9;"></div>
<div class="r" style="left:26px;top:555px;width:1872px;height:1px;background:#dadcd9;"></div>
<div class="r" style="left:26px;top:575px;width:1872px;height:1px;background:#dadcd9;"></div>
<div class="r" style="left:26px;top:595px;width:1872px;height:1px;background:#dadcd9;"></div>
<div class="r" style="left:26px;top:615px;width:1872px;height:1px;background:#dadcd9;"></div>
<div class="r" style="left:26px;top:635px;width:1872px;height:1px;background:#dadcd9;"></div>
<div class="r" style="left:26px;top:655px;width:1872px;height:1px;background:#dadcd9;"></div>
<div class="r" style="left:26px;top:675px;width:1872px;height:1px;background:#dadcd9;"></div>
<div class="r" style="left:26px;top:695px;width:1872px;height:1px;background:#dadcd9;"></div>
<div class="r" style="left:26px;top:715px;width:1872px;height:1px;background:#dadcd9;"></div>
<div class="r" style="left:26px;top:735px;width:1872px;height:1px;background:#dadcd9;"></div>
<div class="r" style="left:26px;top:755px;width:1872px;height:1px;background:#dadcd9;"></div>
<div class="r" style="left:26px;top:775px;width:1872px;height:1px;background:#dadcd9;"></div>
<div class="r" style="left:26px;top:795px;width:1872px;height:1px;background:#dadcd9;"></div>
<div class="r" style="left:26px;top:815px;width:1872px;height:1px;background:#dadcd9;"></div>
<div class="r" style="left:26px;top:835px;width:1872px;height:1px;background:#dadcd9;"></div>
<div class="r" style="left:26px;top:855px;width:1872px;height:1px;background:#dadcd9;"></div>
<div class="r" style="left:26px;top:875px;width:1872px;height:1px;background:#dadcd9;"></div>
<div class="r" style="left:26px;top:895px;width:1872px;height:1px;background:#dadcd9;"></div>
<div class="r" style="left:26px;top:915px;width:1872px;height:1px;background:#dadcd9;"></div>
<div class="r" style="left:26px;top:935px;width:1872px;height:1px;background:#dadcd9;"></div>
<div class="r" style="left:26px;top:955px;width:1872px;height:1px;background:#dadcd9;"></div>
<div class="r" style="left:26px;top:975px;width:1872px;height:1px;background:#dadcd9;"></div>
<div class="r" style="left:26px;top:995px;width:1872px;height:1px;background:#dadcd9;"></div>
<div class="r" style="left:26px;top:1015px;width:1872px;height:1px;background:#dadcd9;"></div>
<div class="r" style="left:159px;top:263px;width:1px;height:19px;background:#b1b2b1;"></div>
<div class="r" style="left:283px;top:263px;width:1px;height:19px;background:#b1b2b1;"></div>
<div class="r" style="left:384px;top:263px;width:1px;height:19px;background:#b1b2b1;"></div>
<div class="r" style="left:534px;top:263px;width:1px;height:19px;background:#b1b2b1;"></div>
<div class="r" style="left:606px;top:263px;width:1px;height:19px;background:#b1b2b1;"></div>
<div class="r" style="left:663px;top:263px;width:1px;height:19px;background:#b1b2b1;"></div>
<div class="r" style="left:737px;top:263px;width:1px;height:19px;background:#b1b2b1;"></div>
<div class="r" style="left:858px;top:263px;width:1px;height:19px;background:#b1b2b1;"></div>
<div class="r" style="left:960px;top:263px;width:1px;height:19px;background:#b1b2b1;"></div>
<div class="r" style="left:1037px;top:263px;width:1px;height:19px;background:#b1b2b1;"></div>
<div class="r" style="left:1134px;top:263px;width:1px;height:19px;background:#b1b2b1;"></div>
<div class="r" style="left:1204px;top:263px;width:1px;height:19px;background:#b1b2b1;"></div>
<div class="r" style="left:1294px;top:263px;width:1px;height:19px;background:#b1b2b1;"></div>
<div class="r" style="left:1390px;top:263px;width:1px;height:19px;background:#b1b2b1;"></div>
<div class="r" style="left:1506px;top:263px;width:1px;height:19px;background:#b1b2b1;"></div>
<div class="r" style="left:1605px;top:263px;width:1px;height:19px;background:#b1b2b1;"></div>
<div class="r" style="left:1724px;top:263px;width:1px;height:19px;background:#b1b2b1;"></div>
<div class="r" style="left:1814px;top:263px;width:1px;height:19px;background:#b1b2b1;"></div>
<div class="r" style="left:25px;top:263px;width:1px;height:766px;background:#a9aaa9;"></div>
<div class="r" style="left:0px;top:282px;width:1898px;height:1px;background:#a9aaa9;"></div>
<div class="r" style="left:0px;top:334px;width:25px;height:1px;background:#b8b9b8;"></div>
<div class="r" style="left:0px;top:354px;width:25px;height:1px;background:#b8b9b8;"></div>
<div class="r" style="left:0px;top:375px;width:25px;height:1px;background:#b8b9b8;"></div>
<div class="r" style="left:0px;top:395px;width:25px;height:1px;background:#b8b9b8;"></div>
<div class="r" style="left:0px;top:415px;width:25px;height:1px;background:#b8b9b8;"></div>
<div class="r" style="left:0px;top:435px;width:25px;height:1px;background:#b8b9b8;"></div>
<div class="r" style="left:0px;top:455px;width:25px;height:1px;background:#b8b9b8;"></div>
<div class="r" style="left:0px;top:475px;width:25px;height:1px;background:#b8b9b8;"></div>
<div class="r" style="left:0px;top:495px;width:25px;height:1px;background:#b8b9b8;"></div>
<div class="r" style="left:0px;top:515px;width:25px;height:1px;background:#b8b9b8;"></div>
<div class="r" style="left:0px;top:535px;width:25px;height:1px;background:#b8b9b8;"></div>
<div class="r" style="left:0px;top:555px;width:25px;height:1px;background:#b8b9b8;"></div>
<div class="r" style="left:0px;top:575px;width:25px;height:1px;background:#b8b9b8;"></div>
<div class="r" style="left:0px;top:595px;width:25px;height:1px;background:#b8b9b8;"></div>
<div class="r" style="left:0px;top:615px;width:25px;height:1px;background:#b8b9b8;"></div>
<div class="r" style="left:0px;top:635px;width:25px;height:1px;background:#b8b9b8;"></div>
<div class="r" style="left:0px;top:655px;width:25px;height:1px;background:#b8b9b8;"></div>
<div class="r" style="left:0px;top:675px;width:25px;height:1px;background:#b8b9b8;"></div>
<div class="r" style="left:0px;top:695px;width:25px;height:1px;background:#b8b9b8;"></div>
<div class="r" style="left:0px;top:715px;width:25px;height:1px;background:#b8b9b8;"></div>
<div class="r" style="left:0px;top:735px;width:25px;height:1px;background:#b8b9b8;"></div>
<div class="r" style="left:0px;top:755px;width:25px;height:1px;background:#b8b9b8;"></div>
<div class="r" style="left:0px;top:775px;width:25px;height:1px;background:#b8b9b8;"></div>
<div class="r" style="left:0px;top:795px;width:25px;height:1px;background:#b8b9b8;"></div>
<div class="r" style="left:0px;top:815px;width:25px;height:1px;background:#b8b9b8;"></div>
<div class="r" style="left:0px;top:835px;width:25px;height:1px;background:#b8b9b8;"></div>
<div class="r" style="left:0px;top:855px;width:25px;height:1px;background:#b8b9b8;"></div>
<div class="r" style="left:0px;top:875px;width:25px;height:1px;background:#b8b9b8;"></div>
<div class="r" style="left:0px;top:895px;width:25px;height:1px;background:#b8b9b8;"></div>
<div class="r" style="left:0px;top:915px;width:25px;height:1px;background:#b8b9b8;"></div>
<div class="r" style="left:0px;top:935px;width:25px;height:1px;background:#b8b9b8;"></div>
<div class="r" style="left:0px;top:955px;width:25px;height:1px;background:#b8b9b8;"></div>
<div class="r" style="left:0px;top:975px;width:25px;height:1px;background:#b8b9b8;"></div>
<div class="r" style="left:0px;top:995px;width:25px;height:1px;background:#b8b9b8;"></div>
<div class="r" style="left:0px;top:1015px;width:25px;height:1px;background:#b8b9b8;"></div>
<svg class="s" style="left:10px;top:265px;" width="14" height="14" viewBox="0 0 14 14"><path d="M12 1.5 V12.5 H1.5 Z" fill="#b5b5b7"/></svg>
<div class="t" style="left:88.33px;top:266.82px;font-size:12.5px;line-height:12.5px;color:#222;font-weight:400;">A</div>
<div class="t" style="left:217.33px;top:266.82px;font-size:12.5px;line-height:12.5px;color:#222;font-weight:400;">B</div>
<div class="t" style="left:329.49px;top:266.82px;font-size:12.5px;line-height:12.5px;color:#222;font-weight:400;">C</div>
<div class="t" style="left:454.99px;top:266.82px;font-size:12.5px;line-height:12.5px;color:#222;font-weight:400;">D</div>
<div class="t" style="left:566.33px;top:266.82px;font-size:12.5px;line-height:12.5px;color:#222;font-weight:400;">E</div>
<div class="t" style="left:631.18px;top:266.82px;font-size:12.5px;line-height:12.5px;color:#222;font-weight:400;">F</div>
<div class="t" style="left:695.64px;top:266.82px;font-size:12.5px;line-height:12.5px;color:#217346;font-weight:400;">G</div>
<div class="t" style="left:793.49px;top:266.82px;font-size:12.5px;line-height:12.5px;color:#222;font-weight:400;">H</div>
<div class="t" style="left:907.76px;top:266.82px;font-size:12.5px;line-height:12.5px;color:#222;font-weight:400;">I</div>
<div class="t" style="left:995.88px;top:266.82px;font-size:12.5px;line-height:12.5px;color:#222;font-weight:400;">J</div>
<div class="t" style="left:1081.83px;top:266.82px;font-size:12.5px;line-height:12.5px;color:#222;font-weight:400;">K</div>
<div class="t" style="left:1166.02px;top:266.82px;font-size:12.5px;line-height:12.5px;color:#222;font-weight:400;">L</div>
<div class="t" style="left:1244.29px;top:266.82px;font-size:12.5px;line-height:12.5px;color:#222;font-weight:400;">M</div>
<div class="t" style="left:1337.99px;top:266.82px;font-size:12.5px;line-height:12.5px;color:#222;font-weight:400;">N</div>
<div class="t" style="left:1443.64px;top:266.82px;font-size:12.5px;line-height:12.5px;color:#222;font-weight:400;">O</div>
<div class="t" style="left:1551.83px;top:266.82px;font-size:12.5px;line-height:12.5px;color:#222;font-weight:400;">P</div>
<div class="t" style="left:1660.14px;top:266.82px;font-size:12.5px;line-height:12.5px;color:#222;font-weight:400;">Q</div>
<div class="t" style="left:1764.99px;top:266.82px;font-size:12.5px;line-height:12.5px;color:#222;font-weight:400;">R</div>
<div class="t" style="left:1864.83px;top:266.82px;font-size:12.5px;line-height:12.5px;color:#222;font-weight:400;">S</div>
<div class="r" style="left:663px;top:281px;width:75px;height:2px;background:#1d6b3c;"></div>
<div class="t" style="left:9.52px;top:320.12px;font-size:12.5px;line-height:12.5px;color:#222;font-weight:400;">1</div>
<div class="t" style="left:9.52px;top:340.12px;font-size:12.5px;line-height:12.5px;color:#222;font-weight:400;">2</div>
<div class="t" style="left:9.52px;top:360.12px;font-size:12.5px;line-height:12.5px;color:#222;font-weight:400;">3</div>
<div class="t" style="left:9.52px;top:381.12px;font-size:12.5px;line-height:12.5px;color:#222;font-weight:400;">4</div>
<div class="t" style="left:9.52px;top:401.12px;font-size:12.5px;line-height:12.5px;color:#222;font-weight:400;">5</div>
<div class="t" style="left:9.52px;top:421.12px;font-size:12.5px;line-height:12.5px;color:#222;font-weight:400;">6</div>
<div class="t" style="left:9.52px;top:441.12px;font-size:12.5px;line-height:12.5px;color:#222;font-weight:400;">7</div>
<div class="t" style="left:9.52px;top:461.12px;font-size:12.5px;line-height:12.5px;color:#222;font-weight:400;">8</div>
<div class="t" style="left:9.52px;top:481.12px;font-size:12.5px;line-height:12.5px;color:#222;font-weight:400;">9</div>
<div class="t" style="left:6.05px;top:501.12px;font-size:12.5px;line-height:12.5px;color:#222;font-weight:400;">10</div>
<div class="t" style="left:6.51px;top:521.12px;font-size:12.5px;line-height:12.5px;color:#222;font-weight:400;">11</div>
<div class="t" style="left:6.05px;top:541.12px;font-size:12.5px;line-height:12.5px;color:#222;font-weight:400;">12</div>
<div class="t" style="left:6.05px;top:561.12px;font-size:12.5px;line-height:12.5px;color:#217346;font-weight:400;">13</div>
<div class="t" style="left:6.05px;top:581.12px;font-size:12.5px;line-height:12.5px;color:#222;font-weight:400;">14</div>
<div class="t" style="left:6.05px;top:601.12px;font-size:12.5px;line-height:12.5px;color:#222;font-weight:400;">15</div>
<div class="t" style="left:6.05px;top:621.12px;font-size:12.5px;line-height:12.5px;color:#222;font-weight:400;">16</div>
<div class="t" style="left:6.05px;top:641.12px;font-size:12.5px;line-height:12.5px;color:#222;font-weight:400;">17</div>
<div class="t" style="left:6.05px;top:661.12px;font-size:12.5px;line-height:12.5px;color:#222;font-weight:400;">18</div>
<div class="t" style="left:6.05px;top:681.12px;font-size:12.5px;line-height:12.5px;color:#222;font-weight:400;">19</div>
<div class="t" style="left:6.05px;top:701.12px;font-size:12.5px;line-height:12.5px;color:#222;font-weight:400;">20</div>
<div class="t" style="left:6.05px;top:721.12px;font-size:12.5px;line-height:12.5px;color:#222;font-weight:400;">21</div>
<div class="t" style="left:6.05px;top:741.12px;font-size:12.5px;line-height:12.5px;color:#222;font-weight:400;">22</div>
<div class="t" style="left:6.05px;top:761.12px;font-size:12.5px;line-height:12.5px;color:#222;font-weight:400;">23</div>
<div class="t" style="left:6.05px;top:781.12px;font-size:12.5px;line-height:12.5px;color:#222;font-weight:400;">24</div>
<div class="t" style="left:6.05px;top:801.12px;font-size:12.5px;line-height:12.5px;color:#222;font-weight:400;">25</div>
<div class="t" style="left:6.05px;top:821.12px;font-size:12.5px;line-height:12.5px;color:#222;font-weight:400;">26</div>
<div class="t" style="left:6.05px;top:841.12px;font-size:12.5px;line-height:12.5px;color:#222;font-weight:400;">27</div>
<div class="t" style="left:6.05px;top:861.12px;font-size:12.5px;line-height:12.5px;color:#222;font-weight:400;">28</div>
<div class="t" style="left:6.05px;top:881.12px;font-size:12.5px;line-height:12.5px;color:#222;font-weight:400;">29</div>
<div class="t" style="left:6.05px;top:901.12px;font-size:12.5px;line-height:12.5px;color:#222;font-weight:400;">30</div>
<div class="t" style="left:6.05px;top:921.12px;font-size:12.5px;line-height:12.5px;color:#222;font-weight:400;">31</div>
<div class="t" style="left:6.05px;top:941.12px;font-size:12.5px;line-height:12.5px;color:#222;font-weight:400;">32</div>
<div class="t" style="left:6.05px;top:961.12px;font-size:12.5px;line-height:12.5px;color:#222;font-weight:400;">33</div>
<div class="t" style="left:6.05px;top:981.12px;font-size:12.5px;line-height:12.5px;color:#222;font-weight:400;">34</div>
<div class="t" style="left:6.05px;top:1001.12px;font-size:12.5px;line-height:12.5px;color:#222;font-weight:400;">35</div>
<div class="t" style="left:6.05px;top:1021.12px;font-size:12.5px;line-height:12.5px;color:#222;font-weight:400;">36</div>
<div class="r" style="left:24px;top:555px;width:2px;height:21px;background:#1d6b3c;"></div>
<div class="r" style="left:534px;top:334px;width:129px;height:1px;background:#8eaadb;"></div>
<div class="r" style="left:1134px;top:334px;width:764px;height:1px;background:#8eaadb;"></div>
<div class="t" style="left:41.00px;top:292.91px;font-size:13.4px;line-height:13.4px;color:#000;font-weight:400;transform:scaleX(1.0079);-webkit-text-stroke:0.08px #000;">N° semaine de la</div>
<div class="t" style="left:71.25px;top:312.66px;font-size:13.4px;line-height:13.4px;color:#000;font-weight:400;transform:scaleX(0.9836);-webkit-text-stroke:0.08px #000;">seance</div>
<div class="t" style="left:166.80px;top:292.91px;font-size:13.4px;line-height:13.4px;color:#000;font-weight:400;transform:scaleX(1.0269);-webkit-text-stroke:0.08px #000;">nb de semaine du</div>
<div class="t" style="left:208.30px;top:312.66px;font-size:13.4px;line-height:13.4px;color:#000;font-weight:400;transform:scaleX(1.0420);-webkit-text-stroke:0.08px #000;">plan</div>
<div class="t" style="left:288.38px;top:292.91px;font-size:13.4px;line-height:13.4px;color:#000;font-weight:400;transform:scaleX(0.9862);-webkit-text-stroke:0.08px #000;">n° seance de la</div>
<div class="t" style="left:307.70px;top:312.66px;font-size:13.4px;line-height:13.4px;color:#000;font-weight:400;transform:scaleX(1.0385);-webkit-text-stroke:0.08px #000;">semaine</div>
<div class="t" style="left:406.25px;top:302.66px;font-size:13.4px;line-height:13.4px;color:#000;font-weight:400;transform:scaleX(1.0067);-webkit-text-stroke:0.08px #000;">date de la seance</div>
<div class="t" style="left:543.00px;top:302.66px;font-size:13.4px;line-height:13.4px;color:#000;font-weight:400;-webkit-text-stroke:0.08px #000;">Allure EF</div>
<div class="t" style="left:616.50px;top:302.66px;font-size:13.4px;line-height:13.4px;color:#000;font-weight:400;transform:scaleX(0.9036);-webkit-text-stroke:0.08px #000;">KM EF</div>
<div class="t" style="left:764.25px;top:292.91px;font-size:13.4px;line-height:13.4px;color:#000;font-weight:400;transform:scaleX(1.0536);-webkit-text-stroke:0.08px #000;">nombre de</div>
<div class="t" style="left:771.12px;top:312.66px;font-size:13.4px;line-height:13.4px;color:#000;font-weight:400;transform:scaleX(1.0163);-webkit-text-stroke:0.08px #000;">Semaine</div>
<div class="t" style="left:876.00px;top:292.91px;font-size:13.4px;line-height:13.4px;color:#000;font-weight:400;transform:scaleX(1.0458);-webkit-text-stroke:0.08px #000;">nombre de</div>
<div class="t" style="left:887.62px;top:312.66px;font-size:13.4px;line-height:13.4px;color:#000;font-weight:400;transform:scaleX(0.9626);-webkit-text-stroke:0.08px #000;">Séance</div>
<div class="t" style="left:980.75px;top:302.66px;font-size:13.4px;line-height:13.4px;color:#000;font-weight:400;transform:scaleX(1.0885);-webkit-text-stroke:0.08px #000;">debut</div>
<div class="t" style="left:1048.25px;top:302.66px;font-size:13.4px;line-height:13.4px;color:#000;font-weight:400;transform:scaleX(1.1018);-webkit-text-stroke:0.08px #000;">compétition</div>
<div class="t" style="left:84.90px;top:339.26px;font-size:13.4px;line-height:13.4px;color:#000;font-weight:400;transform:scaleX(1.0198);-webkit-text-stroke:0.08px #000;">27</div>
<div class="t" style="left:217.77px;top:339.26px;font-size:13.4px;line-height:13.4px;color:#000;font-weight:400;-webkit-text-stroke:0.08px #000;">1</div>
<div class="t" style="left:330.27px;top:339.26px;font-size:13.4px;line-height:13.4px;color:#000;font-weight:400;-webkit-text-stroke:0.08px #000;">1</div>
<div class="t" style="left:424.85px;top:339.26px;font-size:13.4px;line-height:13.4px;color:#000;font-weight:400;transform:scaleX(1.0333);-webkit-text-stroke:0.08px #000;">26/06/2023</div>
<div class="t" style="left:84.90px;top:359.26px;font-size:13.4px;line-height:13.4px;color:#000;font-weight:400;transform:scaleX(1.0198);-webkit-text-stroke:0.08px #000;">27</div>
<div class="t" style="left:217.77px;top:359.26px;font-size:13.4px;line-height:13.4px;color:#000;font-weight:400;-webkit-text-stroke:0.08px #000;">1</div>
<div class="t" style="left:330.27px;top:359.26px;font-size:13.4px;line-height:13.4px;color:#000;font-weight:400;-webkit-text-stroke:0.08px #000;">2</div>
<div class="t" style="left:424.85px;top:359.26px;font-size:13.4px;line-height:13.4px;color:#000;font-weight:400;transform:scaleX(1.0333);-webkit-text-stroke:0.08px #000;">28/06/2023</div>
<div class="t" style="left:84.90px;top:380.26px;font-size:13.4px;line-height:13.4px;color:#000;font-weight:400;transform:scaleX(1.0198);-webkit-text-stroke:0.08px #000;">27</div>
<div class="t" style="left:217.77px;top:380.26px;font-size:13.4px;line-height:13.4px;color:#000;font-weight:400;-webkit-text-stroke:0.08px #000;">1</div>
<div class="t" style="left:330.27px;top:380.26px;font-size:13.4px;line-height:13.4px;color:#000;font-weight:400;-webkit-text-stroke:0.08px #000;">3</div>
<div class="t" style="left:424.85px;top:380.26px;font-size:13.4px;line-height:13.4px;color:#000;font-weight:400;transform:scaleX(1.0333);-webkit-text-stroke:0.08px #000;">29/06/2023</div>
<div class="t" style="left:84.90px;top:400.26px;font-size:13.4px;line-height:13.4px;color:#000;font-weight:400;transform:scaleX(1.0198);-webkit-text-stroke:0.08px #000;">28</div>
<div class="t" style="left:217.77px;top:400.26px;font-size:13.4px;line-height:13.4px;color:#000;font-weight:400;-webkit-text-stroke:0.08px #000;">2</div>
<div class="t" style="left:330.27px;top:400.26px;font-size:13.4px;line-height:13.4px;color:#000;font-weight:400;-webkit-text-stroke:0.08px #000;">1</div>
<div class="t" style="left:424.85px;top:400.26px;font-size:13.4px;line-height:13.4px;color:#000;font-weight:400;transform:scaleX(1.0333);-webkit-text-stroke:0.08px #000;">03/07/2023</div>
<div class="t" style="left:84.90px;top:420.26px;font-size:13.4px;line-height:13.4px;color:#000;font-weight:400;transform:scaleX(1.0198);-webkit-text-stroke:0.08px #000;">28</div>
<div class="t" style="left:217.77px;top:420.26px;font-size:13.4px;line-height:13.4px;color:#000;font-weight:400;-webkit-text-stroke:0.08px #000;">2</div>
<div class="t" style="left:330.27px;top:420.26px;font-size:13.4px;line-height:13.4px;color:#000;font-weight:400;-webkit-text-stroke:0.08px #000;">2</div>
<div class="t" style="left:424.85px;top:420.26px;font-size:13.4px;line-height:13.4px;color:#000;font-weight:400;transform:scaleX(1.0333);-webkit-text-stroke:0.08px #000;">05/07/2023</div>
<div class="t" style="left:84.90px;top:440.26px;font-size:13.4px;line-height:13.4px;color:#000;font-weight:400;transform:scaleX(1.0198);-webkit-text-stroke:0.08px #000;">28</div>
<div class="t" style="left:217.77px;top:440.26px;font-size:13.4px;line-height:13.4px;color:#000;font-weight:400;-webkit-text-stroke:0.08px #000;">2</div>
<div class="t" style="left:330.27px;top:440.26px;font-size:13.4px;line-height:13.4px;color:#000;font-weight:400;-webkit-text-stroke:0.08px #000;">3</div>
<div class="t" style="left:424.85px;top:440.26px;font-size:13.4px;line-height:13.4px;color:#000;font-weight:400;transform:scaleX(1.0333);-webkit-text-stroke:0.08px #000;">07/07/2023</div>
<div class="t" style="left:84.90px;top:460.26px;font-size:13.4px;line-height:13.4px;color:#000;font-weight:400;transform:scaleX(1.0198);-webkit-text-stroke:0.08px #000;">28</div>
<div class="t" style="left:217.77px;top:460.26px;font-size:13.4px;line-height:13.4px;color:#000;font-weight:400;-webkit-text-stroke:0.08px #000;">2</div>
<div class="t" style="left:330.27px;top:460.26px;font-size:13.4px;line-height:13.4px;color:#000;font-weight:400;-webkit-text-stroke:0.08px #000;">4</div>
<div class="t" style="left:424.85px;top:460.26px;font-size:13.4px;line-height:13.4px;color:#000;font-weight:400;transform:scaleX(1.0333);-webkit-text-stroke:0.08px #000;">08/07/2023</div>
<div class="t" style="left:84.90px;top:480.26px;font-size:13.4px;line-height:13.4px;color:#000;font-weight:400;transform:scaleX(1.0198);-webkit-text-stroke:0.08px #000;">29</div>
<div class="t" style="left:217.77px;top:480.26px;font-size:13.4px;line-height:13.4px;color:#000;font-weight:400;-webkit-text-stroke:0.08px #000;">3</div>
<div class="t" style="left:330.27px;top:480.26px;font-size:13.4px;line-height:13.4px;color:#000;font-weight:400;-webkit-text-stroke:0.08px #000;">1</div>
<div class="t" style="left:424.85px;top:480.26px;font-size:13.4px;line-height:13.4px;color:#000;font-weight:400;transform:scaleX(1.0333);-webkit-text-stroke:0.08px #000;">10/07/2023</div>
<div class="t" style="left:790.40px;top:339.26px;font-size:13.4px;line-height:13.4px;color:#000;font-weight:400;transform:scaleX(1.0198);-webkit-text-stroke:0.08px #000;">12</div>
<div class="t" style="left:905.77px;top:339.26px;font-size:13.4px;line-height:13.4px;color:#000;font-weight:400;-webkit-text-stroke:0.08px #000;">4</div>
<div class="t" style="left:964.35px;top:339.26px;font-size:13.4px;line-height:13.4px;color:#000;font-weight:400;transform:scaleX(1.0333);-webkit-text-stroke:0.08px #000;">26/06/2023</div>
<div class="t" style="left:1051.35px;top:339.26px;font-size:13.4px;line-height:13.4px;color:#000;font-weight:400;transform:scaleX(1.0333);-webkit-text-stroke:0.08px #000;">17/09/2023</div>
<div class="t" style="left:991.40px;top:359.26px;font-size:13.4px;line-height:13.4px;color:#000;font-weight:400;transform:scaleX(1.0198);-webkit-text-stroke:0.08px #000;">27</div>
<div class="t" style="left:1078.40px;top:359.26px;font-size:13.4px;line-height:13.4px;color:#000;font-weight:400;transform:scaleX(1.0198);-webkit-text-stroke:0.08px #000;">38</div>
<div class="r" style="left:736px;top:283px;width:2px;height:92px;background:#000;"></div>
<div class="r" style="left:1133px;top:283px;width:2px;height:93px;background:#000;"></div>
<div class="r" style="left:736px;top:374px;width:399px;height:2px;background:#000;"></div>
<div class="r" style="left:662px;top:554px;width:77px;height:2px;background:#1d6b3c;"></div>
<div class="r" style="left:662px;top:554px;width:2px;height:23px;background:#1d6b3c;"></div>
<div class="r" style="left:737px;top:554px;width:2px;height:18px;background:#1d6b3c;"></div>
<div class="r" style="left:662px;top:575px;width:72px;height:2px;background:#1d6b3c;"></div>
<div class="r" style="left:734px;top:572px;width:7px;height:7px;background:#fcfdfb;"></div>
<div class="r" style="left:735px;top:573px;width:5px;height:5px;background:#1d6b3c;"></div>
<div class="r" style="left:1898px;top:282px;width:1px;height:748px;background:#a9aaa9;"></div>
<div class="r" style="left:0px;top:1029px;width:1899px;height:1px;background:#a9aaa9;"></div>
<div class="r" style="left:1899px;top:263px;width:21px;height:794px;background:#e3e5e2;"></div>
<div class="r" style="left:1902px;top:265px;width:15px;height:15px;background:#fff;box-sizing:border-box;border:1px solid #a6a6a6"></div>
<svg class="s" style="left:1905px;top:268px;" width="9" height="9" viewBox="0 0 9 9"><path d="M0.5 6.5 H8.5 L4.5 2.5 Z" fill="#222"/></svg>
<div class="r" style="left:1902px;top:280px;width:15px;height:736px;background:#f1f0f1;"></div>
<div class="r" style="left:1902px;top:280px;width:15px;height:297px;background:#fff;box-sizing:border-box;border:1px solid #a6a6a6"></div>
<div class="r" style="left:1902px;top:1015px;width:15px;height:15px;background:#fff;box-sizing:border-box;border:1px solid #a6a6a6"></div>
<svg class="s" style="left:1905px;top:1018px;" width="9" height="9" viewBox="0 0 9 9"><path d="M0.5 2.5 H8.5 L4.5 6.5 Z" fill="#222"/></svg>
<div class="r" style="left:0px;top:1030px;width:1920px;height:27px;background:#e3e5e2;"></div>
<div class="r" style="left:100px;top:1029px;width:61px;height:24px;background:#fff;box-sizing:border-box;border-left:1px solid #a9aaa9;border-right:1px solid #a9aaa9"></div>
<div class="r" style="left:100px;top:1052px;width:61px;height:2px;background:#217346;"></div>
<div class="t" style="left:112.50px;top:1036.40px;font-size:13px;line-height:13px;color:#217346;font-weight:700;transform:scaleX(0.9450);">Feuil1</div>
<svg class="s" style="left:26px;top:1038px;" width="7" height="9" viewBox="0 0 7 9"><path d="M5.5 0.5 V8 L1 4.25 Z" fill="#bdbdbd"/></svg>
<svg class="s" style="left:55px;top:1038px;" width="7" height="9" viewBox="0 0 7 9"><path d="M1 0.5 V8 L5.5 4.25 Z" fill="#bdbdbd"/></svg>
<svg class="s" style="left:193px;top:1034px;" width="18" height="18" viewBox="0 0 18 18"><circle cx="9" cy="9" r="7.6" fill="none" stroke="#777" stroke-width="1.1"/><path d="M9 5 V13 M5 9 H13" stroke="#555" stroke-width="1.7"/></svg>
<div class="r" style="left:1152px;top:1037px;width:2px;height:2px;background:#a0a0a0;"></div>
<div class="r" style="left:1152px;top:1042px;width:2px;height:2px;background:#a0a0a0;"></div>
<div class="r" style="left:1152px;top:1047px;width:2px;height:2px;background:#a0a0a0;"></div>
<div class="r" style="left:1169px;top:1036px;width:715px;height:15px;background:#f3f2f4;"></div>
<div class="r" style="left:1169px;top:1036px;width:15px;height:15px;background:#fff;box-sizing:border-box;border:1px solid #a6a6a6"></div>
<svg class="s" style="left:1172px;top:1039px;" width="9" height="9" viewBox="0 0 9 9"><path d="M6 0.5 V8.5 L2 4.5 Z" fill="#222"/></svg>
<div class="r" style="left:1183px;top:1036px;width:401px;height:15px;background:#fcfdfb;box-sizing:border-box;border:1px solid #a6a6a6;border-left-width:2px"></div>
<div class="r" style="left:1884px;top:1036px;width:15px;height:15px;background:#fff;box-sizing:border-box;border:1px solid #a6a6a6"></div>
<svg class="s" style="left:1887px;top:1039px;" width="9" height="9" viewBox="0 0 9 9"><path d="M3 0.5 V8.5 L7 4.5 Z" fill="#222"/></svg>
<div class="r" style="left:0px;top:1057px;width:1920px;height:1px;background:#d7d8d6;"></div>
<div class="r" style="left:0px;top:1058px;width:1920px;height:22px;background:#f3f2f4;"></div>
<div class="t" style="left:7.50px;top:1062.74px;font-size:12px;line-height:12px;color:#262626;font-weight:400;transform:scaleX(0.8860);">Prêt</div>
<svg class="s" style="left:46px;top:1060px;" width="16" height="16" viewBox="0 0 16 16"><circle cx="4" cy="4" r="3" fill="#666"/><path d="M7.5 2.5 H14 V4.5" fill="none" stroke="#666" stroke-width="2"/><rect x="1.5" y="7.5" width="12.5" height="7" fill="#fff" stroke="#666" stroke-width="1"/><path d="M3.5 10 H5 M7 10 H8.5 M10.5 10 H12 M3.5 12.5 H5 M7 12.5 H8.5 M10.5 12.5 H12" stroke="#666" stroke-width="1"/></svg>
<svg class="s" style="left:76px;top:1060px;" width="19" height="18" viewBox="0 0 19 18"><path d="M8 3 A6 6 0 1 0 10 14" fill="none" stroke="#555" stroke-width="1.4" stroke-dasharray="2.5 1.2"/><path d="M9 1 V7 M6.5 5 L9 7.5 L11.5 5 M12.5 5.5 H16 M14.5 4 L16 5.5 L14.5 7" fill="none" stroke="#555" stroke-width="1.1"/><path d="M10 12 L13 15.5 L18 9.5" fill="none" stroke="#555" stroke-width="1.6"/></svg>
<div class="t" style="left:96.00px;top:1062.74px;font-size:12px;line-height:12px;color:#262626;font-weight:400;transform:scaleX(0.9580);">Accessibilité : vérification terminée</div>
<div class="r" style="left:48px;top:1078px;width:287px;height:1px;background:#cfcfcf;"></div>
<div class="r" style="left:1617px;top:1058px;width:40px;height:22px;background:#c6c6c6;"></div>
<svg class="s" style="left:1628px;top:1058px;" width="16" height="17" viewBox="0 0 16 17"><rect x="1.5" y="2.5" width="12.5" height="12.5" fill="none" stroke="#666" stroke-width="1"/><path d="M5.5 2.5 V15 M9.8 2.5 V15 M1.5 6.8 H14 M1.5 10.8 H14" stroke="#666" stroke-width="1"/></svg>
<svg class="s" style="left:1669px;top:1058px;" width="18" height="17" viewBox="0 0 18 17"><rect x="1.5" y="2.5" width="13.5" height="12.5" fill="none" stroke="#666" stroke-width="1"/><rect x="4.5" y="4.5" width="7.5" height="8.5" fill="none" stroke="#666" stroke-width="1"/><path d="M6 7 H10.5 M6 9 H10.5 M6 11 H10.5" stroke="#666" stroke-width="0.8"/></svg>
<svg class="s" style="left:1709px;top:1058px;" width="18" height="17" viewBox="0 0 18 17"><path d="M1.5 15 V2.5 H14.5 V15 Z M1.5 11 H7.5 V2.5 M5 2.5 V11" fill="none" stroke="#666" stroke-width="1"/></svg>
<div class="r" style="left:1743px;top:1068px;width:8px;height:1px;background:#333;"></div>
<div class="r" style="left:1756px;top:1068px;width:100px;height:1px;background:#444;"></div>
<div class="r" style="left:1803px;top:1062px;width:4px;height:12px;background:#444;"></div>
<div class="r" style="left:1860px;top:1068px;width:9px;height:1px;background:#333;"></div>
<div class="r" style="left:1864px;top:1064px;width:1px;height:9px;background:#333;"></div>
<div class="t" style="left:1882.50px;top:1063.09px;font-size:11px;line-height:11px;color:#333;font-weight:400;transform:scaleX(0.9362);">100 %</div>
</body></html>
